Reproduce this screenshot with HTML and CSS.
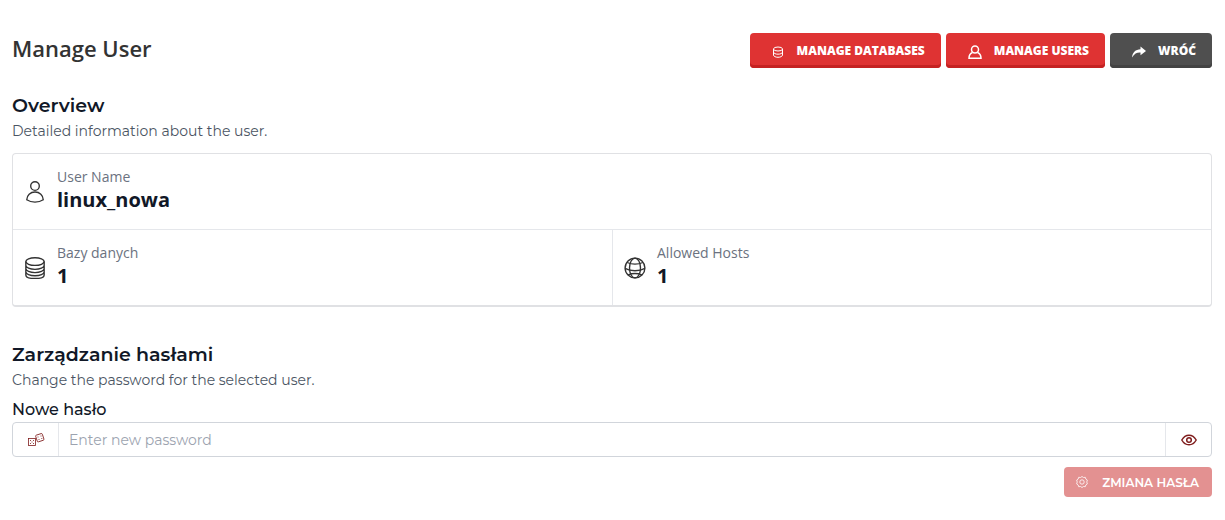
FILE: index.html
```html
<!DOCTYPE html>
<html lang="pl">
<head>
    <meta charset="UTF-8">
    <meta name="viewport" content="width=device-width, initial-scale=1">
    <title>Manage User</title>
    <link rel="stylesheet" href="styles.css">
</head>
<body>

    <header class="page-header">
        <h1>Manage User</h1>
        <div class="actions">
            <button type="button" class="btn btn-red">
                <svg class="icon-db" viewBox="0 0 12 12"><ellipse cx="6" cy="3" rx="4.500" ry="2"/><path d="M1.500 3v6c0 1.300 2 2.300 4.500 2.300s4.500-1 4.500-2.300V3M1.500 6c0 1.300 2 2.200 4.500 2.200s4.500-.9 4.500-2.200"/></svg>
                MANAGE DATABASES
            </button>
            <button type="button" class="btn btn-red">
                <svg class="icon-person" viewBox="0 0 14 14"><circle cx="7" cy="4.500" r="3.500"/><path d="M4.500 7.500C2 8.500 1 10.500 1 13.200h12c0-2.700-1-4.700-3.500-5.700"/></svg>
                MANAGE USERS
            </button>
            <button type="button" class="btn btn-dark">
                <svg class="icon-arrow" viewBox="0 0 14 12"><path d="M0 11.500C.5 6.500 3.500 3.500 8.500 3.300V.5L14 5 8.500 9.300V6.500C5 6.300 2.500 7.500 0 11.500z"/></svg>
                WRÓĆ
            </button>
        </div>
    </header>

    <main>
        <section class="overview">
            <h2>Overview</h2>
            <p class="hint">Detailed information about the user.</p>

            <dl class="card">
                <div class="cell cell-wide">
                    <svg class="icon" viewBox="0 0 24 24"><circle cx="12" cy="5.500" r="4.700"/><path d="M3 20.500c0-5 4-8.500 9-8.500s9 3.500 9 8.500c-2.500 1.700-5.500 2.500-9 2.500s-6.500-.8-9-2.500z"/></svg>
                    <div>
                        <dt>User Name</dt>
                        <dd>linux_nowa</dd>
                    </div>
                </div>
                <div class="cell">
                    <svg class="icon" viewBox="0 0 24 24"><ellipse cx="12" cy="5" rx="10" ry="4.200"/><path d="M2 5v14.500C2 22 6.500 23.500 12 23.500s10-1.500 10-4V5M2 9c0 2.500 4.500 4.500 10 4.500S22 11.500 22 9M2 12.500C2 15 6.500 17 12 17s10-2 10-4.500M2 16c0 2.500 4.500 4.500 10 4.500s10-2 10-4.500"/></svg>
                    <div>
                        <dt>Bazy danych</dt>
                        <dd>1</dd>
                    </div>
                </div>
                <div class="cell">
                    <svg class="icon" viewBox="0 0 24 24"><circle cx="12" cy="12" r="10.800"/><ellipse cx="12" cy="12" rx="6" ry="10.800"/><path d="M3.500 6c2.500 1.200 5.500 1.800 8.500 1.800s6-.6 8.500-1.800M1.200 12.500c3 1.800 7 2.500 10.800 2.500s7.800-.7 10.800-2.500M4.500 19.500c2.300-1 4.700-1.500 7.500-1.500s5.200.5 7.500 1.500"/></svg>
                    <div>
                        <dt>Allowed Hosts</dt>
                        <dd>1</dd>
                    </div>
                </div>
            </dl>
        </section>

        <section class="passwords">
            <h2>Zarządzanie hasłami</h2>
            <p class="hint">Change the password for the selected user.</p>

            <form>
                <label for="password">Nowe hasło</label>
                <div class="input-group">
                    <button type="button" class="addon" aria-label="Generate password">
                        <svg class="icon-dice" viewBox="0 0 18 14"><rect x="1.500" y="5.500" width="7" height="7"/><rect x="9.300" y="1.200" width="7" height="7" rx="1" transform="rotate(-18 12.800 4.700)"/><path d="M3 7.500h1M6 7.500h1M4.500 9h1M3 10.500h1M6 10.500h1M10.500 4h1M13.500 3h1M11.500 6.500h1M14.300 5.500h1"/></svg>
                    </button>
                    <input type="password" id="password" placeholder="Enter new password">
                    <button type="button" class="addon" aria-label="Show password">
                        <svg class="icon-eye" viewBox="0 0 16 12"><path d="M.8 6C2.500 3 5 1.200 8 1.200S13.500 3 15.200 6C13.500 9 11 10.800 8 10.800S2.500 9 .8 6z"/><circle cx="8" cy="6" r="2.300"/></svg>
                    </button>
                </div>
                <button type="submit" class="btn-submit" disabled>
                    <svg class="icon-gear" viewBox="0 0 12 12"><path d="M6 .5l1.500 1 1.800-.2.500 1.700 1.500 1L10.800 6l.5 2-1.500 1-.5 1.700-1.800-.2L6 11.500l-1.500-1-1.800.2L2.200 9 .7 8l.5-2L.7 4l1.500-1 .5-1.700 1.800.2z"/><circle cx="6" cy="6" r="2.200"/></svg>
                    ZMIANA HASŁA
                </button>
            </form>
        </section>
    </main>

</body>
</html>
```

FILE: styles.css
```css
* {
  box-sizing: border-box;
}

body {
  margin: 0;
  padding: 33px 13px 20px 12px;
  background-color: #fff;
  color: #111827;
  font-family: Montserrat, Inter, sans-serif;
  font-size: 14px;
}

h1, h2, p, dl, dd {
  margin: 0;
}

button {
  font: inherit;
  cursor: pointer;
}

svg {
  fill: none;
  stroke: currentColor;
  flex-shrink: 0;
}

.page-header {
  display: flex;
  justify-content: space-between;
  align-items: flex-start;
  margin-bottom: 24px;
}

h1 {
  color: #333;
  font: 600 22px/30px "Open Sans", sans-serif;
}

.actions {
  display: flex;
  gap: 5px;
}

.btn {
  display: flex;
  align-items: center;
  height: 35px;
  padding: 0 16px 0 22px;
  border: none;
  border-radius: 4px;
  color: #fff;
  font: 800 12px/16px "Open Sans", sans-serif;
}

.btn-red {
  background-color: #df3333;
  box-shadow: inset 0 -3px #c52222;
}

.btn-dark {
  background-color: #4f4f4f;
  box-shadow: inset 0 -3px #434343;
}

.icon-db {
  width: 12px;
  height: 12px;
  margin: 2px 13px 0 0;
}

.icon-person {
  width: 14px;
  height: 14px;
  margin: 2px 12px 0 0;
  stroke-width: 1.5;
}

.icon-arrow {
  width: 14px;
  height: 12px;
  margin: 2px 12px 0 0;
  fill: currentColor;
  stroke: none;
}

h2 {
  font-size: 19px;
  font-weight: 600;
  line-height: 28px;
}

.hint {
  color: #4b5563;
  line-height: 22px;
}

.card {
  display: grid;
  grid-template-columns: 1fr 1fr;
  margin-top: 11px;
  border: 1px solid #e0e1e4;
  border-bottom-width: 2px;
  border-radius: 4px;
}

.cell {
  display: flex;
  align-items: center;
  gap: 11px;
  height: 75px;
  padding: 0 11px 4px;
}

.cell + .cell + .cell {
  border-left: 1px solid #e5e7eb;
}

.cell-wide {
  grid-column: 1 / -1;
  height: 76px;
  border-bottom: 1px solid #e5e7eb;
}

.icon {
  width: 22px;
  height: 22px;
  margin-top: 4px;
  stroke: #333;
  stroke-width: 1.5;
}

dt {
  color: #6b7280;
  font: 400 14px/20px "Open Sans", sans-serif;
}

dd {
  font: 700 20px/26px "Open Sans", sans-serif;
}

.passwords {
  margin-top: 34px;
}

label {
  display: block;
  margin-top: 7px;
  font-size: 16px;
  font-weight: 500;
  line-height: 24px;
}

.input-group {
  display: flex;
  height: 35px;
  border: 1px solid #d1d5db;
  border-radius: 4px;
}

.input-group input {
  flex: 1;
  min-width: 0;
  padding: 0 10px;
  border: none;
  background: none;
  color: #111827;
  font: inherit;
}

.input-group input::placeholder {
  color: #9ca3af;
}

.addon {
  display: flex;
  align-items: center;
  justify-content: center;
  width: 46px;
  padding: 0;
  border: none;
  background: none;
  color: #7f1d1d;
}

.addon:first-child {
  border-right: 1px solid #e5e7eb;
}

.addon:last-child {
  border-left: 1px solid #e5e7eb;
}

.icon-dice {
  width: 18px;
  height: 14px;
  stroke-width: 0.8;
}

.icon-eye {
  width: 16px;
  height: 12px;
  stroke-width: 1.5;
}

.btn-submit {
  display: flex;
  align-items: center;
  gap: 14px;
  height: 30px;
  margin: 10px 0 0 auto;
  padding: 0 13px 0 12px;
  border: none;
  border-radius: 4px;
  background-color: #e39191;
  color: #fff;
  font-size: 12px;
  font-weight: 600;
}

.icon-gear {
  width: 12px;
  height: 12px;
  stroke-width: 0.8;
}
```
